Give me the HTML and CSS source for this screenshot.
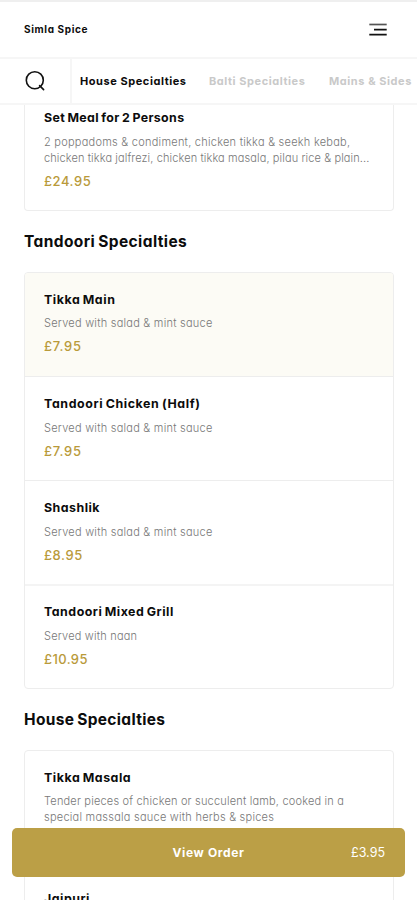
FILE: index.html
```
<!DOCTYPE html>
<html lang="en">
<head>
<meta charset="utf-8">
<meta name="viewport" content="width=device-width, initial-scale=1">
<title>Simla Spice</title>
<link rel="stylesheet" href="styles.css">
</head>
<body>
<header class="header">
  <span class="brand">Simla Spice</span>
  <svg class="menu-icon" width="18" height="14" viewBox="0 0 18 14"><path d="M.3 1.5h17.4" stroke="#555" stroke-width="1.7"/><path d="M5 6.6h12.7M.3 11.7h17.4" stroke="#111" stroke-width="1.7"/></svg>
</header>
<nav class="nav">
  <div class="search"><svg width="22" height="22" viewBox="0 0 22 22" fill="none" stroke="#111" stroke-width="1.6" stroke-linecap="round"><circle cx="9.8" cy="10.2" r="8.5"/><path d="M14.6 15.6l4 4"/></svg></div>
  <div class="tabs">
    <span class="tab active t-house">House Specialties</span>
    <span class="tab t-balti">Balti Specialties</span>
    <span class="tab t-mains">Mains &amp; Sides</span>
  </div>
</nav>
<main class="content">
  <section class="card card-first">
    <article class="item">
      <h3><span class="n-set">Set Meal for 2 Persons</span></h3>
      <p><span class="d-pop">2 poppadoms &amp; condiment, chicken tikka &amp; seekh kebab,</span><br><span class="d-jal">chicken tikka jalfrezi, chicken tikka masala, pilau rice &amp; plain...</span></p>
      <div class="price"><span class="p-24">£24.95</span></div>
    </article>
  </section>
  <h2><span class="h-tandoori">Tandoori Specialties</span></h2>
  <section class="card">
    <article class="item selected">
      <h3><span class="n-main">Tikka Main</span></h3>
      <p><span class="d-served">Served with salad &amp; mint sauce</span></p>
      <div class="price"><span class="p-7">£7.95</span></div>
    </article>
    <article class="item">
      <h3><span class="n-half">Tandoori Chicken (Half)</span></h3>
      <p><span class="d-served">Served with salad &amp; mint sauce</span></p>
      <div class="price"><span class="p-7">£7.95</span></div>
    </article>
    <article class="item">
      <h3><span class="n-shash">Shashlik</span></h3>
      <p><span class="d-served">Served with salad &amp; mint sauce</span></p>
      <div class="price"><span class="p-8">£8.95</span></div>
    </article>
    <article class="item thick">
      <h3><span class="n-grill">Tandoori Mixed Grill</span></h3>
      <p><span class="d-naan">Served with naan</span></p>
      <div class="price"><span class="p-10">£10.95</span></div>
    </article>
  </section>
  <h2><span class="h-house">House Specialties</span></h2>
  <section class="card">
    <article class="item">
      <h3><span class="n-masala">Tikka Masala</span></h3>
      <p><span class="d-tender">Tender pieces of chicken or succulent lamb, cooked in a</span><br><span class="d-special">special massala sauce with herbs &amp; spices</span></p>
    </article>
    <article class="item">
      <h3><span class="n-jai">Jaipuri</span></h3>
    </article>
  </section>
</main>
<div class="order"><span></span><strong>View Order</strong><span class="total">£3.95</span></div>
</body>
</html>
```
FILE: styles.css
```
* { box-sizing: border-box; margin: 0; padding: 0; }
html, body { height: 900px; overflow: hidden; }
body {
  background: #fff;
  color: #0c0c0c;
  font-family: Inter, "Liberation Sans", sans-serif;
  font-feature-settings: "cv11" 1;
  display: flex;
  flex-direction: column;
}
.header {
  height: 59px;
  flex: none;
  display: flex;
  align-items: center;
  justify-content: space-between;
  padding: 0 30px 0 24px;
  border-top: 2px solid #efefef;
  border-bottom: 2px solid #f6f6f6;
}
.brand { font-size: 10px; font-weight: 700; letter-spacing: .64px; padding-bottom: 2px; }
.nav { height: 46px; flex: none; display: flex; border-bottom: 2px solid #f6f6f6; }
.search { width: 72px; flex: none; display: flex; align-items: center; padding-left: 25px; border-right: 2px solid #f6f6f6; }
.tabs { display: flex; align-items: center; overflow: hidden; padding-left: 8px; }
.tab { font-size: 11px; line-height: 20px; font-weight: 650; color: #c9c9c9; white-space: nowrap; flex: none; }
.active { color: #0c0c0c; }
.t-house { width: 129px; letter-spacing: .56px; }
.t-balti { width: 120px; letter-spacing: .56px; }
.t-mains { letter-spacing: .56px; }
.content { flex: 1; min-height: 0; overflow: hidden; padding: 0 23px 0 24px; }
.card { border: 1px solid #ededed; border-radius: 4px; overflow: hidden; }
.item { height: 103px; padding: 17px 19px 0; white-space: nowrap; }
.item + .item { height: 104px; padding-top: 17px; border-top: 1px solid #ededed; }
.item.thick, .item + .item.thick { border-top: 2px solid #f4f4f4; padding-top: 16px; }
.card-first { border-top: 0; border-radius: 0 0 4px 4px; }
.card-first .item { height: 105px; padding-top: 3px; }
.selected { background: #fcfbf5; }
h3 { font-size: 12.4px; line-height: 20px; font-weight: 700; word-spacing: -1px; }
p { font-size: 11px; line-height: 16px; font-weight: 300; color: #777; padding-top: 5px; }
.price { font-size: 13px; line-height: 20px; font-weight: 500; color: #b99a3a; padding-top: 5px; height: 25px; }
.item + .item p { padding-top: 6px; }
h2 { font-size: 15.5px; line-height: 24px; font-weight: 680; height: 61px; padding-top: 19px; word-spacing: -1px; }
.card:last-child .item { height: 120px; }
.card-first .item p { padding-top: 6px; }

.n-set { letter-spacing: .36px; }
.n-main { letter-spacing: .55px; }
.n-half { letter-spacing: .6px; }
.n-shash { letter-spacing: .48px; }
.n-grill { letter-spacing: .5px; }
.n-masala { letter-spacing: .54px; }
.n-jai { letter-spacing: .5px; }
.d-pop { letter-spacing: .25px; }
.d-jal { letter-spacing: .11px; }
.d-served { letter-spacing: .24px; }
.d-naan { letter-spacing: .2px; }
.d-tender { letter-spacing: .19px; }
.d-special { letter-spacing: .24px; }
.p-24 { letter-spacing: .55px; }
.p-7 { letter-spacing: .8px; }
.p-8 { letter-spacing: .55px; }
.p-10 { letter-spacing: .38px; }
.h-tandoori { letter-spacing: .4px; }
.h-house { letter-spacing: .32px; }

.order {
  position: absolute;
  left: 12px;
  right: 12px;
  top: 828px;
  height: 49px;
  border-radius: 5px;
  background: #bb9f46;
  color: #fff;
  display: grid;
  grid-template-columns: 1fr auto 1fr;
  align-items: center;
  padding: 0 20px;
  font-size: 12px;
}
.order strong { font-weight: 700; letter-spacing: .65px; }
.total { text-align: right; font-size: 12.5px; font-weight: 400; }
```
